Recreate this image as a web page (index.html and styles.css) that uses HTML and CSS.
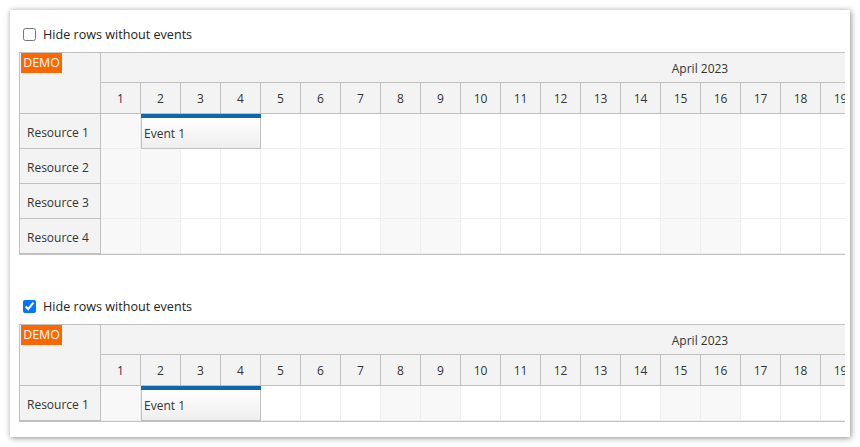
FILE: index.html
```html
<!DOCTYPE html>
<html>
<head>
<meta charset="utf-8">
<link rel="stylesheet" href="styles.css">
</head>
<body>
<div class="card">
  <div class="toolbar">
    <label class="opt"><input type="checkbox">Hide rows without events</label>
  </div>
  <div class="scheduler">
    <div class="rh">
      <div class="corner"><span class="demo">DEMO</span></div>
      <div class="res">Resource 1</div>
      <div class="res">Resource 2</div>
      <div class="res">Resource 3</div>
      <div class="res">Resource 4</div>
    </div>
    <div class="tl">
      <div class="month">April 2023</div>
      <div class="days">
        <div class="d">1</div><div class="d">2</div><div class="d">3</div><div class="d">4</div><div class="d">5</div><div class="d">6</div><div class="d">7</div><div class="d">8</div><div class="d">9</div><div class="d">10</div><div class="d">11</div><div class="d">12</div><div class="d">13</div><div class="d">14</div><div class="d">15</div><div class="d">16</div><div class="d">17</div><div class="d">18</div><div class="d">19</div><div class="d">20</div><div class="d">21</div><div class="d">22</div><div class="d">23</div><div class="d">24</div><div class="d">25</div><div class="d">26</div><div class="d">27</div><div class="d">28</div><div class="d">29</div><div class="d">30</div>
      </div>
      <div class="row">
        <div class="c we"></div><div class="c we"></div><div class="c"></div><div class="c"></div><div class="c"></div><div class="c"></div><div class="c"></div><div class="c we"></div><div class="c we"></div><div class="c"></div><div class="c"></div><div class="c"></div><div class="c"></div><div class="c"></div><div class="c we"></div><div class="c we"></div><div class="c"></div><div class="c"></div><div class="c"></div><div class="c"></div><div class="c"></div><div class="c we"></div><div class="c we"></div><div class="c"></div><div class="c"></div><div class="c"></div><div class="c"></div><div class="c"></div><div class="c we"></div><div class="c we"></div>
        <div class="ev"><div class="ev-bar"></div><div class="ev-body">Event 1</div></div>
      </div>
      <div class="row">
        <div class="c we"></div><div class="c we"></div><div class="c"></div><div class="c"></div><div class="c"></div><div class="c"></div><div class="c"></div><div class="c we"></div><div class="c we"></div><div class="c"></div><div class="c"></div><div class="c"></div><div class="c"></div><div class="c"></div><div class="c we"></div><div class="c we"></div><div class="c"></div><div class="c"></div><div class="c"></div><div class="c"></div><div class="c"></div><div class="c we"></div><div class="c we"></div><div class="c"></div><div class="c"></div><div class="c"></div><div class="c"></div><div class="c"></div><div class="c we"></div><div class="c we"></div>
      </div>
      <div class="row">
        <div class="c we"></div><div class="c we"></div><div class="c"></div><div class="c"></div><div class="c"></div><div class="c"></div><div class="c"></div><div class="c we"></div><div class="c we"></div><div class="c"></div><div class="c"></div><div class="c"></div><div class="c"></div><div class="c"></div><div class="c we"></div><div class="c we"></div><div class="c"></div><div class="c"></div><div class="c"></div><div class="c"></div><div class="c"></div><div class="c we"></div><div class="c we"></div><div class="c"></div><div class="c"></div><div class="c"></div><div class="c"></div><div class="c"></div><div class="c we"></div><div class="c we"></div>
      </div>
      <div class="row">
        <div class="c we"></div><div class="c we"></div><div class="c"></div><div class="c"></div><div class="c"></div><div class="c"></div><div class="c"></div><div class="c we"></div><div class="c we"></div><div class="c"></div><div class="c"></div><div class="c"></div><div class="c"></div><div class="c"></div><div class="c we"></div><div class="c we"></div><div class="c"></div><div class="c"></div><div class="c"></div><div class="c"></div><div class="c"></div><div class="c we"></div><div class="c we"></div><div class="c"></div><div class="c"></div><div class="c"></div><div class="c"></div><div class="c"></div><div class="c we"></div><div class="c we"></div>
      </div>
    </div>
  </div>

  <div class="toolbar second">
    <label class="opt"><input type="checkbox" checked>Hide rows without events</label>
  </div>
  <div class="scheduler">
    <div class="rh">
      <div class="corner"><span class="demo">DEMO</span></div>
      <div class="res">Resource 1</div>
    </div>
    <div class="tl">
      <div class="month">April 2023</div>
      <div class="days">
        <div class="d">1</div><div class="d">2</div><div class="d">3</div><div class="d">4</div><div class="d">5</div><div class="d">6</div><div class="d">7</div><div class="d">8</div><div class="d">9</div><div class="d">10</div><div class="d">11</div><div class="d">12</div><div class="d">13</div><div class="d">14</div><div class="d">15</div><div class="d">16</div><div class="d">17</div><div class="d">18</div><div class="d">19</div><div class="d">20</div><div class="d">21</div><div class="d">22</div><div class="d">23</div><div class="d">24</div><div class="d">25</div><div class="d">26</div><div class="d">27</div><div class="d">28</div><div class="d">29</div><div class="d">30</div>
      </div>
      <div class="row">
        <div class="c we"></div><div class="c we"></div><div class="c"></div><div class="c"></div><div class="c"></div><div class="c"></div><div class="c"></div><div class="c we"></div><div class="c we"></div><div class="c"></div><div class="c"></div><div class="c"></div><div class="c"></div><div class="c"></div><div class="c we"></div><div class="c we"></div><div class="c"></div><div class="c"></div><div class="c"></div><div class="c"></div><div class="c"></div><div class="c we"></div><div class="c we"></div><div class="c"></div><div class="c"></div><div class="c"></div><div class="c"></div><div class="c"></div><div class="c we"></div><div class="c we"></div>
        <div class="ev"><div class="ev-bar"></div><div class="ev-body">Event 1</div></div>
      </div>
    </div>
  </div>
</div>
</body>
</html>
```

FILE: styles.css
```css
html, body {
  margin: 0;
  background: #fff;
}
body {
  padding: 10px;
  font-family: "Open Sans", "Noto Sans", sans-serif;
  font-size: 12px;
  color: #333;
}
.card {
  width: 840px;
  box-sizing: border-box;
  padding: 0 5px 15px 9px;
  background: #fff;
  box-shadow: 1px 1px 6px rgba(0, 0, 0, 0.45);
}
.toolbar {
  height: 20px;
  padding: 14px 0 8px;
  display: flex;
  align-items: center;
}
.toolbar.second {
  margin-top: 27px;
}
.opt {
  display: flex;
  align-items: center;
  color: #222;
  font-size: 12.6px;
}
.opt input {
  width: 13px;
  height: 13px;
  margin: 0 7px 0 4px;
}
.scheduler {
  width: 826px;
  box-sizing: border-box;
  display: flex;
  border: 1px solid #c0c0c0;
  border-right: 0;
  overflow: hidden;
}
.rh {
  width: 81px;
  flex: none;
  box-sizing: border-box;
  background: #f3f3f3;
  border-right: 1px solid #c0c0c0;
}
.corner {
  height: 60px;
  border-bottom: 1px solid #c0c0c0;
  position: relative;
}
.demo {
  position: absolute;
  left: 1px;
  top: 0;
  width: 41px;
  height: 20px;
  background: #ff6600;
  color: #fff;
  font-size: 12.4px;
  line-height: 20px;
  text-align: center;
}
.res {
  border-bottom: 1px solid #c0c0c0;
  display: flex;
  align-items: center;
  padding-left: 7px;
  padding-top: 2px;
  height: 32px;
}
.tl {
  flex: 1;
  min-width: 0;
  overflow: hidden;
}
.month {
  width: 1199px;
  height: 29px;
  padding-top: 1px;
  box-sizing: border-box;
  height: 30px;
  background: #f3f3f3;
  border-bottom: 1px solid #c0c0c0;
  border-right: 1px solid #c0c0c0;
  display: flex;
  align-items: center;
  justify-content: center;
}
.days {
  display: flex;
  width: 1200px;
  background: #f3f3f3;
  border-bottom: 1px solid #c0c0c0;
}
.d {
  flex: none;
  width: 39px;
  height: 30px;
  border-right: 1px solid #c0c0c0;
  display: flex;
  align-items: center;
  justify-content: center;
}
.row {
  display: flex;
  width: 1200px;
  position: relative;
}
.c {
  flex: none;
  width: 39px;
  height: 34px;
  border-right: 1px solid #eee;
  border-bottom: 1px solid #eee;
  background: #fff;
}
.c.we {
  background: #f8f8f8;
}
.ev {
  position: absolute;
  left: 40px;
  top: 0;
  width: 120px;
  height: 35px;
  display: flex;
  flex-direction: column;
}
.ev-bar {
  height: 4px;
  background: #1066a8;
}
.ev-body {
  flex: 1;
  border: 1px solid #c0c0c0;
  border-top: 0;
  background: linear-gradient(#fff, #eee);
  padding-left: 2px;
  display: flex;
  align-items: center;
}
```
